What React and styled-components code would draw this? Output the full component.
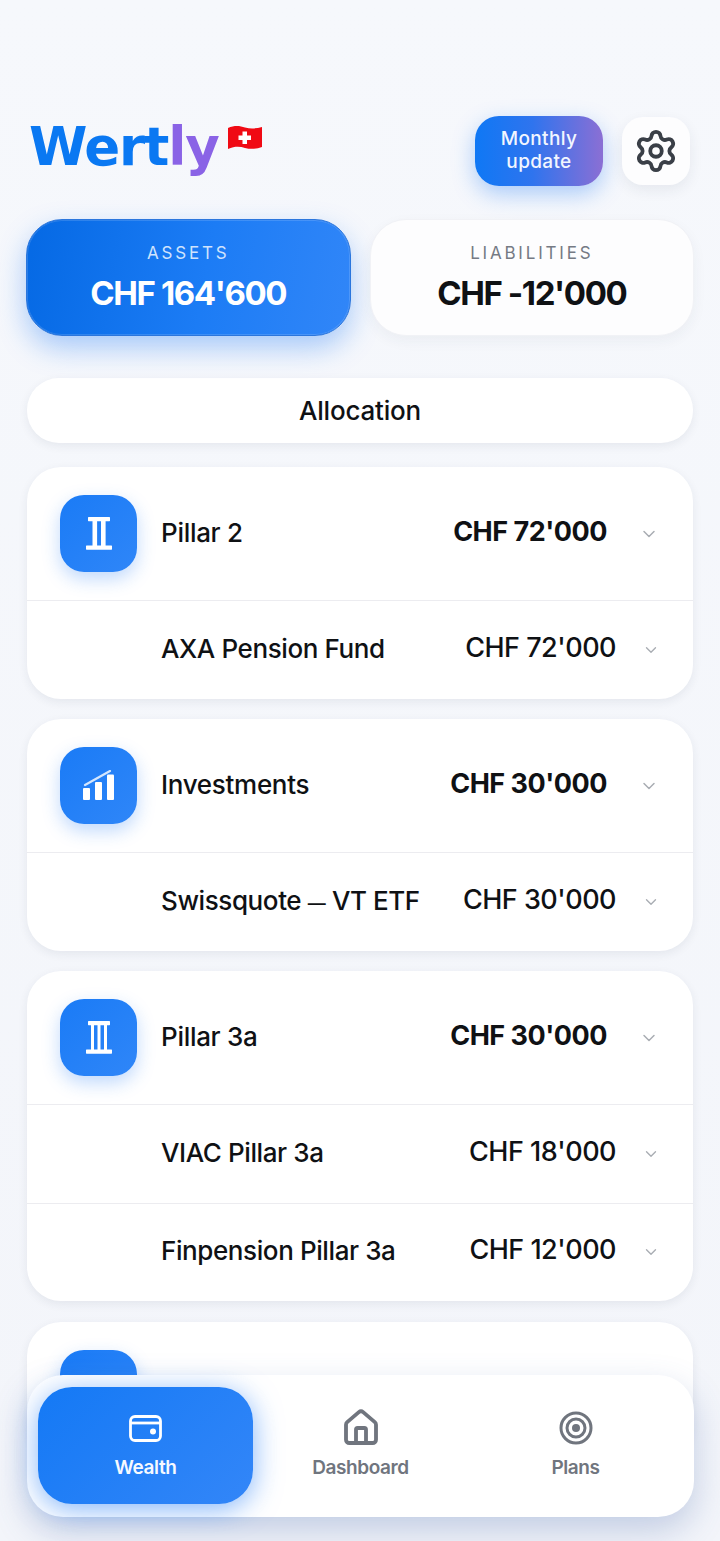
import React from "react";
import styled, { createGlobalStyle } from "styled-components";
import { Settings, ChevronDown, House } from "lucide-react";

const GlobalStyle = createGlobalStyle`
  html, body {
    margin: 0;
    padding: 0;
    height: 100%;
    overflow: hidden;
  }
  body {
    font-family: "Inter", "Liberation Sans", sans-serif;
    background: #f4f6fb;
    color: #0f1114;
  }
`;

const Dash = styled.span`
  font-size: 18px;
`;

const PillarIcon = ({ columns }) => (
  <svg width="26" height="33" viewBox="0 0 26 33" fill="#fff">
    <rect x="2" y="0" width="22" height="4.2" rx="0.6" />
    <rect x="0" y="28.5" width="26" height="4.2" rx="0.6" />
    {columns === 2 ? (
      <>
        <rect x="6.500" y="4" width="4.6" height="25" />
        <rect x="15" y="4" width="4.6" height="25" />
      </>
    ) : (
      <>
        <rect x="5" y="4" width="3" height="25" />
        <rect x="11.500" y="4" width="3" height="25" />
        <rect x="18" y="4" width="3" height="25" />
      </>
    )}
  </svg>
);

const GrowthIcon = () => (
  <svg width="32" height="31" viewBox="0 0 32 31" fill="#fff">
    <rect x="0" y="18" width="7" height="12" rx="1" />
    <rect x="12" y="12" width="7" height="18" rx="1" />
    <rect x="24" y="4.500" width="7" height="25.500" rx="1" />
    <path d="M2 15 L27 1" stroke="#fff" strokeWidth="2.2" strokeLinecap="round" fill="none" opacity="0.8" />
  </svg>
);

const WalletIcon = () => (
  <svg width="33" height="27" viewBox="0 0 33 27" fill="none" stroke="#fff" strokeWidth="2.8">
    <rect x="1.500" y="1.500" width="30" height="24" rx="4.5" />
    <path d="M1.500 8 H31.500" />
    <circle cx="24" cy="16.500" r="3" fill="#fff" stroke="none" />
  </svg>
);

const TargetIcon = () => (
  <svg width="34" height="34" viewBox="0 0 34 34" fill="none" stroke="#70757e" strokeWidth="3">
    <circle cx="17" cy="17" r="15" />
    <circle cx="17" cy="17" r="9" />
    <circle cx="17" cy="17" r="4" fill="#70757e" stroke="none" />
  </svg>
);

const FlagIcon = () => (
  <svg width="36" height="26" viewBox="0 0 36 26">
    <path d="M1 3 C8 0 13 1 18 2.500 C24 4 29 3.500 35 2 V22 C29 24 24 24.500 18 23 C13 21.500 8 21 1 24 Z" fill="#f00a14" />
    <path d="M15.500 6.500 H20 V10.500 H24 V15 H20 V19 H15.500 V15 H11.500 V10.500 H15.500 Z" fill="#fff" />
  </svg>
);

const groups = [
  {
    name: "Pillar 2",
    total: "CHF 72'000",
    icon: <PillarIcon columns={2} />,
    items: [{ name: "AXA Pension Fund", amount: "CHF 72'000" }],
  },
  {
    name: "Investments",
    total: "CHF 30'000",
    icon: <GrowthIcon />,
    items: [
      {
        name: (
          <>
            Swissquote <Dash>—</Dash> VT ETF
          </>
        ),
        amount: "CHF 30'000",
      },
    ],
  },
  {
    name: "Pillar 3a",
    total: "CHF 30'000",
    icon: <PillarIcon columns={3} />,
    items: [
      { name: "VIAC Pillar 3a", amount: "CHF 18'000" },
      { name: "Finpension Pillar 3a", amount: "CHF 12'000" },
    ],
  },
];

const App = () => {
  return (
    <>
      <GlobalStyle />
      <Page>
        <Header>
          <LogoBox>
            <Logo>
              Wert<LogoAccent>ly</LogoAccent>
            </Logo>
            <FlagBox>
              <FlagIcon />
            </FlagBox>
          </LogoBox>
          <Actions>
            <MonthlyButton>
              Monthly
              <br />
              update
            </MonthlyButton>
            <GearButton>
              <Settings size={46} color="#3a3f47" strokeWidth={2} />
            </GearButton>
          </Actions>
        </Header>

        <Totals>
          <TotalCard $active>
            <TotalLabel $active>ASSETS</TotalLabel>
            <TotalValue $active>CHF 164'600</TotalValue>
          </TotalCard>
          <TotalCard>
            <TotalLabel>LIABILITIES</TotalLabel>
            <TotalValue>CHF -12'000</TotalValue>
          </TotalCard>
        </Totals>

        <AllocationButton>Allocation</AllocationButton>

        <Groups>
          {groups.map((group) => (
            <GroupCard key={group.name}>
              <GroupRow>
                <IconTile>{group.icon}</IconTile>
                <GroupName>{group.name}</GroupName>
                <GroupAmount>{group.total}</GroupAmount>
                <GroupChevron>
                  <ChevronDown size={20} color="#a9adb3" strokeWidth={1.8} />
                </GroupChevron>
              </GroupRow>
              {group.items.map((item) => (
                <ItemRow key={item.amount}>
                  <ItemName>{item.name}</ItemName>
                  <ItemAmount>{item.amount}</ItemAmount>
                  <ItemChevron>
                    <ChevronDown size={18} color="#a9adb3" strokeWidth={1.8} />
                  </ItemChevron>
                </ItemRow>
              ))}
            </GroupCard>
          ))}
          <GroupCard>
            <GroupRow>
              <IconTile />
            </GroupRow>
          </GroupCard>
        </Groups>

        <BottomNav>
          <NavTab $active>
            <NavIcon>
              <WalletIcon />
            </NavIcon>
            <NavLabel $active>Wealth</NavLabel>
          </NavTab>
          <NavTab>
            <NavIcon>
              <House size={40} color="#70757e" strokeWidth={2.3} />
            </NavIcon>
            <NavLabel>Dashboard</NavLabel>
          </NavTab>
          <NavTab>
            <NavIcon>
              <TargetIcon />
            </NavIcon>
            <NavLabel>Plans</NavLabel>
          </NavTab>
        </BottomNav>
      </Page>
    </>
  );
};

const Page = styled.div`
  position: relative;
  height: 1541px;
  overflow: hidden;
  box-sizing: border-box;
  padding: 116px 27px 0;
  background: linear-gradient(180deg, #f6f8fc 0%, #f3f5fa 100%);
`;

const Header = styled.div`
  display: flex;
  align-items: flex-start;
  justify-content: space-between;
  height: 70px;
  padding-right: 3px;
`;

const LogoBox = styled.div`
  display: flex;
  align-items: flex-start;
  padding-left: 2px;
`;

const Logo = styled.div`
  font-family: "DejaVu Sans", "Inter", sans-serif;
  font-size: 53px;
  line-height: 62px;
  font-weight: 700;
  letter-spacing: -1.2px;
  color: #0a78f2;
`;

const LogoAccent = styled.span`
  color: #8a63e6;
`;

const FlagBox = styled.div`
  margin: 9px 0 0 8px;
  height: 26px;
`;

const Actions = styled.div`
  display: flex;
  align-items: center;
  gap: 19px;
`;

const MonthlyButton = styled.div`
  width: 128px;
  height: 70px;
  box-sizing: border-box;
  padding-bottom: 3px;
  display: flex;
  align-items: center;
  justify-content: center;
  text-align: center;
  border-radius: 24px;
  background: linear-gradient(90deg, #0f78f5 0%, #2f74ee 45%, #8b6fd4 100%);
  box-shadow: 0 8px 22px rgba(30, 120, 245, 0.35);
  color: #f2f6ff;
  font-size: 19px;
  line-height: 23px;
  font-weight: 500;
  letter-spacing: 0.35px;
`;

const GearButton = styled.div`
  width: 68px;
  height: 68px;
  display: flex;
  align-items: center;
  justify-content: center;
  border-radius: 21px;
  background: #fdfdfe;
  box-shadow: 0 5px 14px rgba(40, 50, 80, 0.08);
`;

const Totals = styled.div`
  display: flex;
  gap: 19px;
  margin: 33px -1px 0;
`;

const TotalCard = styled.div`
  flex: 1;
  height: 117px;
  box-sizing: border-box;
  display: flex;
  flex-direction: column;
  align-items: center;
  padding-top: 23px;
  border-radius: 36px;
  background: ${(p) =>
    p.$active ? "linear-gradient(100deg, #0569e4 0%, #1c7cf5 55%, #3186f8 100%)" : "#fdfdfe"};
  border: ${(p) => (p.$active ? "1px solid #2b76dd" : "1px solid #f1f2f6")};
  box-shadow: ${(p) =>
    p.$active
      ? "0 12px 28px rgba(20, 115, 245, 0.35), inset 0 0 0 1px rgba(255, 255, 255, 0.14)"
      : "0 5px 14px rgba(40, 50, 80, 0.05)"};
`;

const TotalLabel = styled.div`
  font-size: 17px;
  line-height: 20px;
  letter-spacing: 2.8px;
  color: ${(p) => (p.$active ? "#cfe3fd" : "#757a84")};
`;

const TotalValue = styled.div`
  margin-top: 9px;
  font-size: 33px;
  line-height: 42px;
  font-weight: 700;
  letter-spacing: -1.4px;
  color: ${(p) => (p.$active ? "#ffffff" : "#0f1114")};
`;

const AllocationButton = styled.div`
  margin-top: 42px;
  height: 65px;
  display: flex;
  align-items: center;
  justify-content: center;
  border-radius: 32px;
  background: #fff;
  box-shadow: 0 3px 10px rgba(40, 50, 80, 0.08);
  font-size: 26px;
  font-weight: 500;
  letter-spacing: -0.2px;
`;

const Groups = styled.div`
  display: flex;
  flex-direction: column;
  gap: 20.5px;
  margin-top: 24px;
`;

const GroupCard = styled.div`
  border-radius: 34px;
  background: #fff;
  box-shadow: 0 3px 10px rgba(40, 50, 80, 0.08);
  flex-shrink: 0;
`;

const GroupRow = styled.div`
  height: 133px;
  box-sizing: border-box;
  display: flex;
  align-items: center;
  padding: 0 33px;
`;

const IconTile = styled.div`
  width: 77px;
  height: 77px;
  flex-shrink: 0;
  display: flex;
  align-items: center;
  justify-content: center;
  border-radius: 24px;
  background: linear-gradient(135deg, #1a7bf6 0%, #2f86f8 100%);
  box-shadow: 0 7px 18px rgba(30, 120, 245, 0.28);
`;

const GroupName = styled.div`
  margin: 0 0 3px 24px;
  flex: 1;
  font-size: 26px;
  font-weight: 500;
  letter-spacing: -0.3px;
`;

const GroupAmount = styled.div`
  margin-bottom: 4px;
  font-size: 27px;
  font-weight: 700;
  letter-spacing: -0.5px;
`;

const GroupChevron = styled.div`
  display: flex;
  margin-left: 32px;
  margin-right: 1px;
`;

const ItemRow = styled.div`
  height: 98.5px;
  box-sizing: border-box;
  display: flex;
  align-items: center;
  padding: 0 33px 0 134px;
  border-top: 1px solid #ececf0;
`;

const ItemName = styled.div`
  flex: 1;
  margin-bottom: 3px;
  font-size: 26px;
  font-weight: 500;
  letter-spacing: -0.4px;
`;

const ItemAmount = styled.div`
  margin-bottom: 5px;
  font-size: 27px;
  font-weight: 500;
  letter-spacing: -0.5px;
`;

const ItemChevron = styled.div`
  display: flex;
  margin-left: 26px;
`;

const BottomNav = styled.div`
  position: absolute;
  left: 27px;
  top: 1375px;
  width: 667px;
  height: 142px;
  box-sizing: border-box;
  padding: 12px 11px 13px;
  display: grid;
  grid-template-columns: repeat(3, 1fr);
  border-radius: 36px;
  background: #fff;
  box-shadow: 0 14px 34px rgba(70, 100, 170, 0.28);
`;

const NavTab = styled.div`
  display: flex;
  flex-direction: column;
  align-items: center;
  justify-content: center;
  gap: 9px;
  padding-bottom: 4px;
  border-radius: 34px;
  background: ${(p) =>
    p.$active ? "linear-gradient(135deg, #1479f5 0%, #3386f8 100%)" : "transparent"};
  box-shadow: ${(p) => (p.$active ? "0 5px 28px rgba(30, 120, 245, 0.55)" : "none")};
`;

const NavIcon = styled.div`
  height: 40px;
  display: flex;
  align-items: center;
  justify-content: center;
`;

const NavLabel = styled.div`
  font-size: 19px;
  line-height: 22px;
  font-weight: 600;
  letter-spacing: -0.4px;
  color: ${(p) => (p.$active ? "#f6f9ff" : "#70757e")};
`;

export default App;
